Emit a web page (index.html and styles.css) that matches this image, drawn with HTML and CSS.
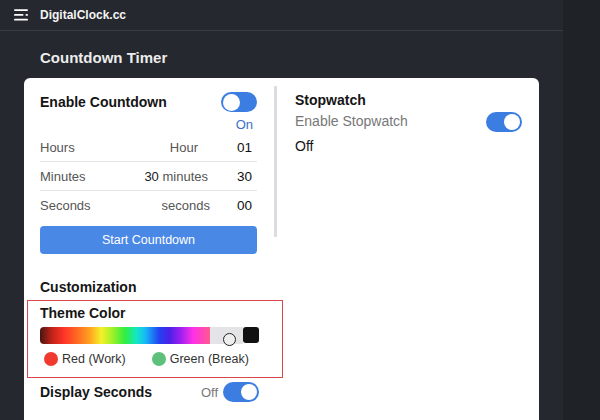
FILE: index.html
```html
<!DOCTYPE html>
<html lang="en">
<head>
<meta charset="utf-8">
<title>DigitalClock.cc</title>
<link rel="stylesheet" href="styles.css">
</head>
<body>
<div class="page">
  <div class="main">
    <header class="topbar">
      <svg class="menu-icon" width="14" height="12" viewBox="0 0 14 12">
        <rect x="0" y="0.2" width="14" height="1.8" rx="0.9" fill="#fff"/>
        <rect x="0" y="5" width="9.5" height="1.8" rx="0.9" fill="#fff"/>
        <rect x="11.5" y="5" width="2.5" height="1.8" rx="0.9" fill="#fff"/>
        <rect x="0" y="9.8" width="14" height="1.8" rx="0.9" fill="#fff"/>
      </svg>
      <span class="brand">DigitalClock.cc</span>
    </header>
    <div class="content">
      <h1 class="page-title">Countdown Timer</h1>
      <div class="card">
        <div class="col-left">
          <div class="head-row">
            <span class="heading">Enable Countdown</span>
            <span class="toggle toggle-left"><span class="knob"></span></span>
          </div>
          <div class="on-label">On</div>
          <div class="time-row">
            <span class="t-label">Hours</span>
            <span class="t-mid t-mid-hour">Hour</span>
            <span class="t-val">01</span>
          </div>
          <div class="time-row">
            <span class="t-label">Minutes</span>
            <span class="t-mid"><span class="dark">30</span> minutes</span>
            <span class="t-val">30</span>
          </div>
          <div class="time-row last">
            <span class="t-label">Seconds</span>
            <span class="t-mid t-mid-sec">seconds</span>
            <span class="t-val">00</span>
          </div>
          <button class="start-btn">Start Countdown</button>
          <div class="heading custom-title">Customization</div>
          <div class="theme-box">
            <div class="heading">Theme Color</div>
            <div class="color-bar">
              <div class="spectrum"></div>
              <div class="gray-part"><span class="picker-knob"></span></div>
              <div class="black-swatch"></div>
            </div>
            <div class="legend">
              <span class="dot dot-red"></span><span class="legend-text">Red (Work)</span>
              <span class="dot dot-green"></span><span class="legend-text">Green (Break)</span>
            </div>
          </div>
          <div class="head-row seconds-row">
            <span class="heading">Display Seconds</span>
            <span class="switch-group">
              <span class="off-small">Off</span>
              <span class="toggle toggle-right"><span class="knob"></span></span>
            </span>
          </div>
        </div>
        <div class="divider"></div>
        <div class="col-right">
          <div class="heading">Stopwatch</div>
          <div class="sw-row">
            <span class="sw-label">Enable Stopwatch</span>
            <span class="toggle toggle-right"><span class="knob"></span></span>
          </div>
          <div class="sw-off">Off</div>
        </div>
      </div>
    </div>
  </div>
  <aside class="side"></aside>
</div>
</body>
</html>
```
FILE: styles.css
```css
* { box-sizing: border-box; }
html, body { margin: 0; padding: 0; }
body {
  background: #25282e;
  font-family: "Liberation Sans", Arial, sans-serif;
  width: 600px;
  height: 420px;
  overflow: hidden;
}
.page { display: flex; height: 420px; }
.main { width: 563px; }
.side { flex: 1; background: #1f2227; }

.topbar {
  height: 31px;
  border-bottom: 1px solid #3a3d44;
  display: flex;
  align-items: center;
  padding-left: 14px;
  padding-bottom: 1px;
}
.menu-icon { display: block; }
.brand {
  margin-left: 12px;
  color: #f4f4f4;
  font-size: 12px;
  font-weight: bold;
}

.content { padding: 0 0 0 24px; }
.page-title {
  margin: 0;
  padding: 18px 0 0 16px;
  height: 47px;
  color: #ececec;
  font-size: 15px;
  font-weight: bold;
  line-height: 18px;
}

.card {
  width: 515px;
  background: #fff;
  border-radius: 6px 6px 0 0;
  display: flex;
  align-items: flex-start;
  padding: 8px 17px 0 16px;
  height: 360px;
}
.col-left { width: 217px; padding-top: 6px; }
.divider {
  width: 3px;
  height: 151px;
  background: #dcdce0;
  margin-left: 17px;
  border-radius: 1px;
}
.col-right { flex: 1; padding-left: 18px; padding-top: 5px; }

.heading {
  font-size: 14px;
  font-weight: bold;
  color: #151515;
  line-height: 18px;
}
.head-row {
  display: flex;
  justify-content: space-between;
  align-items: center;
  height: 20px;
}

.toggle {
  width: 36px;
  height: 20px;
  border-radius: 10px;
  background: #3b7de0;
  display: flex;
  align-items: center;
  padding: 0 2px;
}
.toggle .knob {
  width: 16px;
  height: 16px;
  border-radius: 50%;
  background: #fff;
}
.toggle-right { justify-content: flex-end; }
.toggle-left { justify-content: flex-start; }
.toggle-left .knob { width: 17px; height: 17px; }

.on-label {
  margin-top: 5px;
  text-align: right;
  padding-right: 4px;
  font-size: 13px;
  line-height: 16px;
  color: #3a70c9;
}

.time-row {
  display: flex;
  align-items: center;
  height: 29px;
  border-bottom: 1px solid #e6e6e8;
  font-size: 13px;
  color: #555;
  padding-top: 1px;
}
.time-row.last { border-bottom: none; height: 28px; }
.t-label { flex: 1; }
.t-mid { text-align: right; color: #555; }
.t-mid-hour { margin-right: 10px; }
.t-mid-sec { margin-right: -2px; }
.dark { color: #1a1a1a; }
.t-val {
  width: 49px;
  text-align: right;
  padding-right: 5px;
  color: #111;
  font-size: 13.5px;
}

.start-btn {
  display: block;
  width: 217px;
  height: 28px;
  margin-top: 7px;
  border: none;
  border-radius: 4px;
  background: #4a88e6;
  color: #fff;
  font-family: inherit;
  font-size: 12.5px;
  font-weight: normal;
  padding: 0;
}

.custom-title { margin-top: 24px; }

.theme-box {
  margin: 4px -26px 0 -13px;
  border: 1px solid #d9474a;
  padding: 3px 12px 11px 12px;
}
.color-bar {
  display: flex;
  margin-top: 5px;
  width: 219px;
  height: 17px;
}
.spectrum {
  width: 170px;
  height: 17px;
  border-radius: 4px 0 0 4px;
  background: linear-gradient(to right,
    #4a1510 0%, #c02418 7%, #ff3328 14%, #ff6a22 22%, #ffa020 29%,
    #f6f028 36%, #9af02a 43%, #30ee40 50%, #12e6c8 57%, #18b8f6 62%,
    #2244f2 70%, #4a20e8 76%, #a020f0 83%, #ff30e8 90%, #ff5a90 100%);
}
.gray-part {
  position: relative;
  width: 33px;
  height: 17px;
  background: #e4e4e6;
}
.picker-knob {
  position: absolute;
  left: 13px;
  top: 6px;
  width: 13px;
  height: 13px;
  border-radius: 50%;
  border: 1.6px solid #222;
  background: #eee;
}
.black-swatch {
  width: 16px;
  height: 16px;
  border-radius: 3px;
  background: #111;
}

.legend {
  display: flex;
  align-items: center;
  margin-top: 8px;
  padding-left: 4px;
  height: 14px;
}
.dot {
  width: 14px;
  height: 14px;
  border-radius: 50%;
}
.dot-red { background: #f03a30; }
.dot-green { background: #5ec07a; margin-left: 26px; }
.legend-text {
  margin-left: 4px;
  font-size: 12.5px;
  color: #333;
}

.seconds-row { margin-top: 4px; margin-right: -2px; }
.switch-group { display: flex; align-items: center; }
.off-small { font-size: 13px; color: #777; margin-right: 5px; }

.sw-row {
  display: flex;
  justify-content: space-between;
  align-items: center;
  height: 20px;
  margin-top: 2px;
}
.sw-row .toggle { margin-top: 2px; }
.sw-label { font-size: 14px; color: #777; }
.sw-off {
  margin-top: 7px;
  font-size: 14px;
  color: #151515;
  line-height: 16px;
}
```
